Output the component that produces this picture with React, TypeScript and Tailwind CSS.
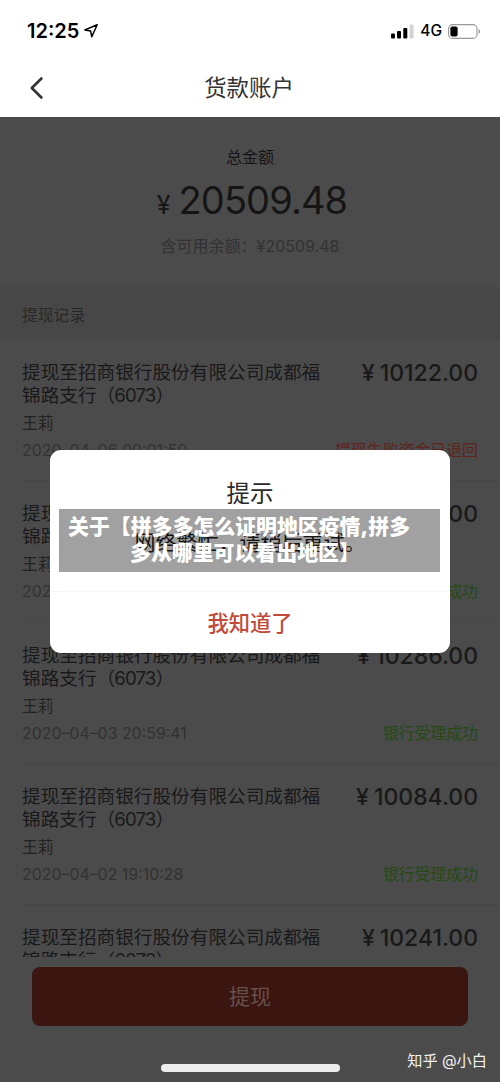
const records = [
  { amount: '10122.00', date: '2020–04–06 00:01:50', status: '提现失败资金已退回', failed: true },
  { amount: '10150.00', date: '2020–04–05 10:21:36', status: '银行受理成功', failed: false },
  { amount: '10286.00', date: '2020–04–03 20:59:41', status: '银行受理成功', failed: false },
  { amount: '10084.00', date: '2020–04–02 19:10:28', status: '银行受理成功', failed: false },
  { amount: '10241.00' },
];

function StatusBar() {
  return (
    <div className="flex h-[60px] items-center justify-between pl-[27px] pr-[19px] pt-[2px] text-black">
      <div className="flex items-center gap-[5px]">
        <span className="text-[20px] font-semibold leading-none">12:25</span>
        <svg width="14" height="14" viewBox="0 0 14 14" fill="none" stroke="currentColor" strokeWidth="1.5" strokeLinejoin="round">
          <path d="M13.2 0.8 L0.9 6 L6.6 7 L7.8 12.8 Z" />
        </svg>
      </div>
      <div className="flex items-center">
        <svg width="23" height="15" viewBox="0 0 23 15">
          <rect x="0" y="9.5" width="4" height="5" rx="1" />
          <rect x="6" y="7" width="4" height="7.5" rx="1" />
          <rect x="12.3" y="4" width="4" height="10.5" rx="1" />
          <rect x="18.6" y="0.5" width="4" height="14" rx="1" fill="#d4d4d4" />
        </svg>
        <span className="ml-[6px] text-[15.5px] font-medium leading-none">4G</span>
        <svg className="ml-[6px]" width="33" height="15" viewBox="0 0 33 15">
          <rect x="0.6" y="0.6" width="28.4" height="13.8" rx="4" fill="none" stroke="#999" strokeWidth="1.1" />
          <rect x="2.4" y="2.5" width="7.2" height="10" rx="1.8" />
          <path d="M30.6 5 C32.6 5.8 32.6 9.2 30.6 10 Z" fill="#999" />
        </svg>
      </div>
    </div>
  );
}

function NavBar() {
  return (
    <div className="grid h-[57px] grid-cols-[1fr_auto_1fr] items-center pl-[29px] pr-[31px]">
      <svg className="-mt-[2px]" width="16" height="24" viewBox="0 0 16 24" fill="none" stroke="#333" strokeWidth="2.6" strokeLinejoin="round" strokeLinecap="round">
        <path d="M12.4 2.5 L2.8 12 L12.4 21.5" />
      </svg>
      <h1 className="-mt-px text-[22.4px] font-normal text-[#333]">货款账户</h1>
    </div>
  );
}

function Summary() {
  return (
    <section className="flex h-[170px] flex-col items-center pt-[30px] text-[#151515]">
      <p className="text-[16px] leading-[20px]">总金额</p>
      <p className="mt-[9px] flex items-baseline pl-[4px] leading-[48px]">
        <span className="mr-[8px] text-[25px]">¥</span>
        <span className="text-[38px] tracking-[-0.9px]">20509.48</span>
      </p>
      <p className="mt-[7px] text-[16px] leading-[20px] text-[#323232]">含可用余额：¥20509.48</p>
    </section>
  );
}

function RecordRow({ record }: { record: (typeof records)[number] }) {
  return (
    <li className="ml-[22px] h-[141.3px] border-b border-[#464646] pr-[22px] pt-[21px]">
      <div className="flex items-start justify-between text-[#191919]">
        <p className="w-[300px] text-[18.65px] leading-[23px]">
          提现至招商银行股份有限公司成都福锦路支行<span className="tracking-[-0.9px]">（6073）</span>
        </p>
        <p className="flex text-[23px] font-medium leading-[24px]">
          <span className="mr-[5px]">¥</span>
          <span>{record.amount}</span>
        </p>
      </div>
      {record.date && (
        <>
          <p className="mt-[6px] text-[15.7px] leading-[22px] text-[#222]">王莉</p>
          <div className="mt-[5px] flex justify-between leading-[22px]">
            <span className="text-[15.9px] text-[#323232]">{record.date}</span>
            <span className={record.failed ? 'text-[15.9px] text-[#5f231c]' : 'text-[15.9px] text-[#254a14]'}>{record.status}</span>
          </div>
        </>
      )}
    </li>
  );
}

function Dialog() {
  return (
    <div role="dialog" className="absolute left-[50px] top-[450px] h-[202.5px] w-[400px] rounded-[11px] bg-white text-center">
      <h2 className="pt-[29px] text-[23.5px] leading-[30px] text-[#2a2a2a]">提示</h2>
      <p className="mt-[19px] text-[21px] leading-[30px] text-[#222]">网络繁忙，请稍后重试。</p>
      <button className="mt-[33px] h-[61px] w-full border-t border-[#f8f8f8] pt-[4px] text-[21.3px] font-medium text-[#c24a3a]">
        我知道了
      </button>
      <div className="absolute left-[9px] top-[59px] h-[63px] w-[381px] bg-black/37 pl-[9px] pt-[5px] text-left text-[20.9px] font-black leading-[26px] text-white">
        <p>关于【拼多多怎么证明地区疫情,拼多</p>
        <p className="pl-[62px]">多从哪里可以看出地区】</p>
      </div>
    </div>
  );
}

export default function App() {
  return (
    <main className="relative flex h-[1082px] w-[500px] flex-col overflow-hidden bg-[#4b4b4b] font-['Inter','Noto_Sans_CJK_SC',sans-serif]">
      <header className="h-[117px] shrink-0 bg-white">
        <StatusBar />
        <NavBar />
      </header>
      <Summary />
      <h2 className="h-[53px] shrink-0 bg-[#474747] pl-[22px] text-[15.8px] leading-[58px] text-[#282828]">提现记录</h2>
      <ul className="h-[617px] shrink-0 overflow-hidden">
        {records.map((record) => (
          <RecordRow key={record.amount} record={record} />
        ))}
      </ul>
      <footer className="flex flex-1 flex-col px-8 pt-[10px]">
        <button className="h-[59px] rounded-[8px] bg-[#3b1510] text-[21px] text-[#67504c]">提现</button>
        <div className="mt-[38px] ml-[129px] h-[8px] w-[179px] rounded-full bg-[#ececec]" />
      </footer>
      <p className="absolute bottom-[10px] right-[13px] text-[15.2px] leading-[22px] text-[#f2f2f2]">知乎 @小白</p>
      <Dialog />
    </main>
  );
}
